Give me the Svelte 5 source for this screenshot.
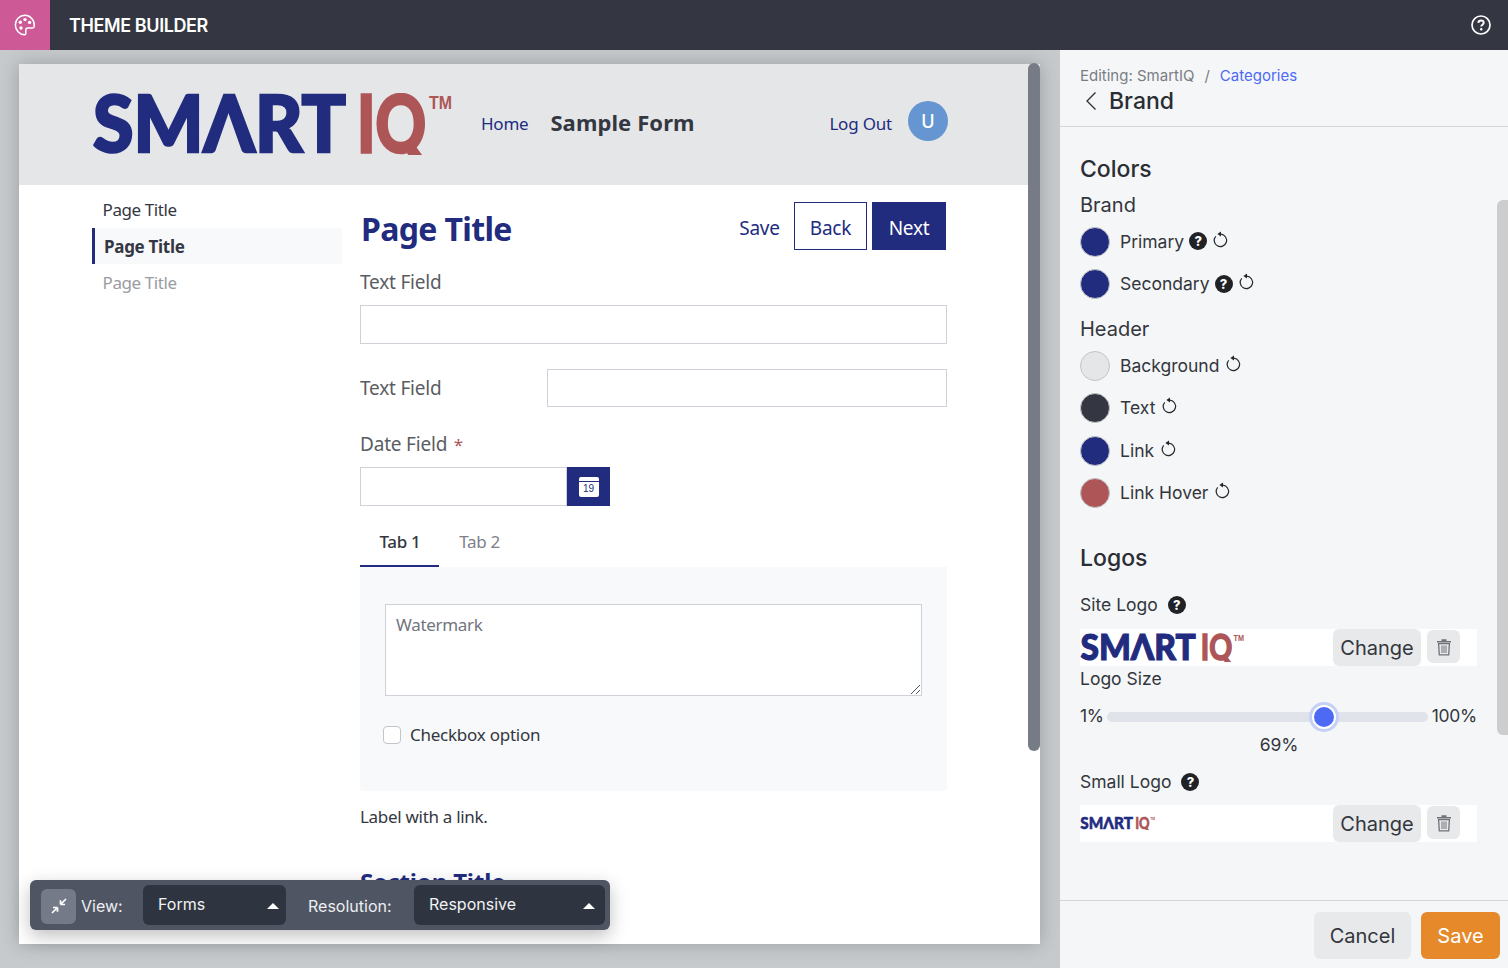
<script>
  const brandRows = [
    { name: 'Primary', color: '#212c7f', help: true },
    { name: 'Secondary', color: '#212c7f', help: true }
  ];
  const headerRows = [
    { name: 'Background', color: '#e5e6e8' },
    { name: 'Text', color: '#343741' },
    { name: 'Link', color: '#212c7f' },
    { name: 'Link Hover', color: '#ad5557' }
  ];
</script>

{#snippet logo(cls)}
  <svg class={cls} viewBox="0 0 360 62" role="img" aria-label="SmartIQ logo">
    <text class="lg-a" x="1" y="59" textLength="253" lengthAdjust="spacingAndGlyphs">SMΛRT</text>
    <text class="lg-b" x="265" y="59" textLength="69" lengthAdjust="spacingAndGlyphs">IQ</text>
    <text class="lg-c" x="337" y="16" textLength="23" lengthAdjust="spacingAndGlyphs">TM</text>
  </svg>
{/snippet}

{#snippet reset()}
  <svg class="reset" viewBox="0 0 17 17" aria-hidden="true">
    <path d="M9 3.200A6.200 6.200 0 1 1 3.700 5.300" fill="none" stroke="#24272c" stroke-width="1.200"/>
    <path d="M5.400 3.100 9 .6v5z" fill="#24272c"/>
  </svg>
{/snippet}

{#snippet help()}
  <span class="help">?</span>
{/snippet}

{#snippet trash()}
  <button class="trash" aria-label="Delete">
    <svg viewBox="0 0 16 18" width="16" height="18" aria-hidden="true">
      <path d="M1 3h14v1.600H1zM5.500 1.200h5V3h-5z" fill="#6f7278"/>
      <path d="M2.600 5.600h10.800l-.7 11.200H3.300z" fill="none" stroke="#6f7278" stroke-width="1.300"/>
      <path d="M6 7.500v7.500M8 7.500v7.500M10 7.500v7.500" stroke="#6f7278" stroke-width="1"/>
    </svg>
  </button>
{/snippet}

<div class="app">
  <header class="topbar">
    <div class="brandmark">
      <svg viewBox="0 0 22 22" width="22" height="22" aria-hidden="true">
        <path d="M11 1.300C5.600 1.300 1.400 5.500 1.400 11c0 5.200 4 9.600 9 9.700.9 0 1.400-.5 1.400-1.300v-3.200c0-1.300 1-2.100 2-2.100h4.700c1 0 1.700-.7 1.800-1.800.5-6.300-4.200-11-9.300-11z" fill="none" stroke="#fff" stroke-width="1.500"/>
        <circle cx="11" cy="5.600" r="1.700" fill="#fff"/>
        <circle cx="6.300" cy="8.300" r="1.700" fill="#fff"/>
        <circle cx="15.600" cy="8.400" r="1.700" fill="#fff"/>
        <circle cx="7" cy="14" r="1.700" fill="#fff"/>
      </svg>
    </div>
    <div class="apptitle">THEME BUILDER</div>
    <svg class="tophelp" viewBox="0 0 20 20" width="20" height="20" aria-hidden="true">
      <circle cx="10" cy="10" r="9" fill="none" stroke="#fff" stroke-width="1.700"/>
      <path d="M7.300 7.900C7.400 6.300 8.600 5.500 10 5.500c1.600 0 2.700.9 2.700 2.200 0 2-2.500 2-2.500 3.800" fill="none" stroke="#fff" stroke-width="1.900"/>
      <circle cx="10.200" cy="14.300" r="1.200" fill="#fff"/>
    </svg>
  </header>

  <div class="workspace">
    <main class="stage">
      <div class="preview">
        <div class="site-header">
          {@render logo('logo-lg')}
          <a class="home">Home</a>
          <span class="sample">Sample Form</span>
          <a class="logout">Log Out</a>
          <span class="avatar">U</span>
        </div>
        <div class="site-body">
          <nav class="pages">
            <div class="page">Page Title</div>
            <div class="page active">Page Title</div>
            <div class="page muted">Page Title</div>
          </nav>
          <div class="form">
            <div class="titlebar">
              <h1>Page Title</h1>
              <div class="actions">
                <span class="btn-save">Save</span>
                <span class="btn-back">Back</span>
                <span class="btn-next">Next</span>
              </div>
            </div>
            <label class="lbl first">Text Field</label>
            <div class="input full"></div>
            <div class="inline">
              <label class="lbl">Text Field</label>
              <div class="input wide"></div>
            </div>
            <label class="lbl date">Date Field <span class="req">*</span></label>
            <div class="datefield">
              <div class="input dateinput"></div>
              <div class="calbtn">
                <div class="cal"><span>19</span></div>
              </div>
            </div>
            <div class="tabs">
              <div class="tab on">Tab 1</div>
              <div class="tab">Tab 2</div>
            </div>
            <div class="tabpanel">
              <div class="textarea">
                Watermark
                <svg class="grip" viewBox="0 0 10 10" width="10" height="10" aria-hidden="true">
                  <path d="M1 10 10 1M6 10l4-4" stroke="#555" stroke-width="1" fill="none"/>
                </svg>
              </div>
              <div class="check"><span class="box"></span>Checkbox option</div>
            </div>
            <p class="linkline">Label with a link.</p>
            <h2>Section Title</h2>
          </div>
        </div>
      </div>
      <div class="stage-scroll"></div>

      <div class="toolbar">
        <button class="compress" aria-label="Compress">
          <svg viewBox="0 0 20 20" width="20" height="20" aria-hidden="true">
            <path d="M11.500 8.500 17 3M11.500 8.500V4.200M11.500 8.500h4.500M8.500 11.500 3 17M8.500 11.500V15.800M8.500 11.500H4" fill="none" stroke="#fff" stroke-width="1.700"/>
          </svg>
        </button>
        <span class="tl view">View:</span>
        <div class="sel forms">Forms<i></i></div>
        <span class="tl res">Resolution:</span>
        <div class="sel resp">Responsive<i></i></div>
      </div>
    </main>

    <aside class="panel">
      <div class="panel-head">
        <div class="crumbs"><span>Editing: SmartIQ</span><span class="slash">/</span><a>Categories</a></div>
        <div class="backrow">
          <svg viewBox="0 0 14 20" width="14" height="20" aria-hidden="true"><path d="M11.500 1.500 3 10l8.500 8.500" fill="none" stroke="#2a2d33" stroke-width="1.300"/></svg>
          <span>Brand</span>
        </div>
      </div>
      <div class="panel-body">
        <div class="sec colors">Colors</div>
        <div class="sub">Brand</div>
        {#each brandRows as r}
          <div class="row">
            <span class="dot" style="background:{r.color}"></span>
            <span class="rname">{r.name}</span>
            {@render help()}
            {@render reset()}
          </div>
        {/each}
        <div class="sub hdr">Header</div>
        {#each headerRows as r}
          <div class="row">
            <span class="dot" style="background:{r.color}"></span>
            <span class="rname">{r.name}</span>
            {@render reset()}
          </div>
        {/each}
        <div class="sec logos">Logos</div>
        <div class="fieldname site">Site Logo {@render help()}</div>
        <div class="logorow">
          <div class="logocell">{@render logo('logo-md')}</div>
          <button class="change">Change</button>
          {@render trash()}
        </div>
        <div class="fieldname size">Logo Size</div>
        <div class="sliderrow">
          <span>1%</span>
          <div class="track"><span class="thumb"></span></div>
          <span class="max">100%</span>
        </div>
        <div class="pct">69%</div>
        <div class="fieldname small">Small Logo {@render help()}</div>
        <div class="logorow second">
          <div class="logocell">{@render logo('logo-sm')}</div>
          <button class="change">Change</button>
          {@render trash()}
        </div>
      </div>
      <div class="panel-foot">
        <button class="cancel">Cancel</button>
        <button class="save">Save</button>
      </div>
      <div class="panel-scroll"></div>
    </aside>
  </div>
</div>

<style>
  :global(body) { margin: 0; overflow: hidden; }
  button { font: inherit; border: 0; padding: 0; }
  .app { width: 1508px; height: 968px; display: flex; flex-direction: column; overflow: hidden; font-family: Inter, sans-serif; }

  .topbar { height: 50px; flex: none; background: #343741; display: flex; align-items: center; color: #fff; }
  .brandmark { width: 50px; height: 50px; background: #cd5a96; display: flex; align-items: center; justify-content: center; }
  .apptitle { margin-left: 19px; font: 600 18px Inter, sans-serif; letter-spacing: -0.4px; }
  .tophelp { margin-left: auto; margin-right: 17px; }

  .workspace { flex: 1; display: flex; min-height: 0; }
  .stage { width: 1060px; flex: none; position: relative; background: #c6cacd; padding: 14px 20px 24px 19px; box-sizing: border-box; overflow: hidden; }
  .preview { height: 880px; background: #fff; box-shadow: 0 0 18px rgba(0,0,0,.22); overflow: hidden; font-family: "Noto Sans", sans-serif; color: #343741; }
  .stage-scroll { position: absolute; left: 1028px; top: 13px; width: 12px; height: 688px; border-radius: 6px; background: #767b86; }

  .site-header { height: 121px; background: #e5e6e8; display: flex; align-items: center; padding-left: 73px; box-sizing: border-box; position: relative; }
  .logo-lg { width: 360px; height: 62px; flex: none; margin-top: -2px; }
  .logo-md { display: block; width: 164px; height: 29px; }
  .logo-sm { display: block; width: 75px; height: 14px; margin-top: -2px; }
  .logocell { margin-right: auto; }
  .lg-a { font: 900 79px Lato, sans-serif; fill: #212c7f; stroke: #212c7f; stroke-width: 2.500px; }
  .lg-b { font: 700 79px Lato, sans-serif; fill: #ad5557; stroke: #ad5557; stroke-width: 3.500px; }
  .lg-c { font: 700 19px "Liberation Sans", sans-serif; fill: #ad5557; }
  .home { margin: -2px 0 0 29px; font-size: 17px; color: #212c7f; letter-spacing: -0.25px; }
  .sample { margin: -6px 0 0 22px; font-size: 22px; font-weight: 700; letter-spacing: .1px; color: #343741; }
  .logout { margin: -2px 0 0 auto; font-size: 17px; color: #212c7f; letter-spacing: -0.2px; }
  .avatar { margin: -7px 92px 0 16px; width: 40px; height: 40px; border-radius: 50%; background: #6596d2; color: #fff; display: flex; align-items: center; justify-content: center; font: 500 18px Inter, sans-serif; }

  .site-body { display: flex; padding-left: 73px; padding-top: 7px; }
  .pages { width: 250px; flex: none; margin-right: 18px; }
  .page { height: 36px; line-height: 36px; padding-left: 10.500px; font-size: 17px; letter-spacing: -.4px; color: #343741; box-sizing: border-box; }
  .page.active { background: #f8f9fb; border-left: 3px solid #212c7f; padding-left: 9px; font-weight: 700; line-height: 38px; letter-spacing: -.3px; }
  .page.muted { color: #9a9ca2; line-height: 38px; }

  .form { width: 587px; }
  .titlebar { height: 48px; margin-top: 10px; display: flex; align-items: center; }
  h1 { margin: 6px 0 0 1px; font-size: 32px; font-weight: 700; color: #212c7f; letter-spacing: -0.65px; line-height: 42px; }
  .actions { margin-left: auto; margin-right: 1px; display: flex; align-items: stretch; height: 48px; font-size: 19px; letter-spacing: -.25px; }
  .actions span { display: flex; align-items: center; justify-content: center; box-sizing: border-box; padding-top: 3px; }
  .btn-save { color: #212c7f; width: 41px; margin-right: 14px; }
  .btn-back { color: #212c7f; width: 73px; border: 1px solid #212c7f; margin-right: 5px; }
  .btn-next { color: #fff; width: 74px; background: #212c7f; }
  .lbl { display: block; font-size: 19px; color: #5a5c63; letter-spacing: -.2px; line-height: 24px; }
  .lbl.first { margin-top: 20px; }
  .input { height: 39px; box-sizing: border-box; border: 1px solid #cfd0d8; background: #fff; }
  .full { margin-top: 11px; }
  .inline { display: flex; align-items: center; margin-top: 25px; }
  .inline .lbl { width: 187px; }
  .wide { flex: 1; height: 38px; }
  .date { margin-top: 25px; }
  .req { color: #ad5557; margin-left: 2px; font-size: 17px; }
  .datefield { display: flex; margin-top: 10px; }
  .dateinput { width: 207px; }
  .calbtn { width: 43px; height: 39px; background: #212c7f; display: flex; align-items: center; justify-content: center; }
  .cal { width: 20px; height: 20px; background: #fff; border-radius: 2px; position: relative; box-sizing: border-box; padding-top: 6px; text-align: center; }
  .cal::before { content: ""; position: absolute; left: 0; right: 0; top: 4px; height: 1px; background: #212c7f; }
  .cal span { display: block; font: 10px/12px "Liberation Sans", sans-serif; color: #212c7f; }
  .tabs { display: flex; margin-top: 11px; height: 50px; }
  .tab { width: 79px; text-align: center; line-height: 50px; font-size: 17px; color: #7c8089; letter-spacing: -.3px; box-sizing: border-box; }
  .tab:last-child { width: 81px; }
  .tab.on { color: #343741; font-weight: 500; border-bottom: 2px solid #212c7f; padding-left: 1px; }
  .tabpanel { height: 224px; background: #f8f9fa; border-radius: 0 0 4px 4px; padding: 37px 25px 0; box-sizing: border-box; }
  .textarea { height: 92px; box-sizing: border-box; border: 1px solid #cfd0d8; background: #fff; padding: 8px 10px; font-size: 17px; letter-spacing: -.3px; line-height: 24px; color: #72757d; position: relative; }
  .grip { position: absolute; right: 1px; bottom: 1px; }
  .check { display: flex; align-items: center; margin: 30px 0 0 -2px; font-size: 17px; letter-spacing: -.25px; color: #343741; line-height: 18px; }
  .box { width: 18px; height: 18px; box-sizing: border-box; border: 1px solid #c3c4ca; border-radius: 4px; background: #fff; margin-right: 9px; }
  .linkline { margin: 14px 0 0; font-size: 17px; letter-spacing: -.3px; line-height: 24px; color: #343741; }
  h2 { margin: 37px 0 0; font-size: 24px; font-weight: 700; color: #212c7f; line-height: 32px; letter-spacing: -.15px; }

  .toolbar { position: absolute; left: 30px; top: 830px; width: 580px; height: 50px; border-radius: 6px; background: #4f5562; box-shadow: 0 6px 18px rgba(0,0,0,.25); display: flex; align-items: center; color: #fff; font-size: 16px; }
  .compress { width: 35px; height: 35px; margin: 2px 0 0 11px; background: #757a89; border-radius: 6px; display: flex; align-items: center; justify-content: center; flex: none; }
  .tl { color: #eceef1; margin-top: 1px; }
  .view { margin-left: 5px; width: 62px; }
  .res { margin-left: 22px; width: 106px; }
  .sel { height: 40px; line-height: 39px; background: #2f3540; border-radius: 6px; padding-left: 15px; box-sizing: border-box; position: relative; color: #f1f2f4; }
  .forms { width: 143px; }
  .resp { width: 191px; }
  .sel i { position: absolute; right: 7px; top: 18px; border: 6px solid transparent; border-top: 0; border-bottom: 6px solid #fff; }
  .resp i { right: 10px; }

  .panel { flex: 1; background: #f5f6f8; display: flex; flex-direction: column; position: relative; color: #33363c; min-width: 0; }
  .panel-head { height: 77px; flex: none; border-bottom: 1px solid #d4d5da; padding: 16px 20px 0; box-sizing: border-box; }
  .crumbs { font-size: 15px; line-height: 20px; color: #7a7d85; }
  .slash { margin: 0 10px; }
  .crumbs a { color: #4d6af5; }
  .backrow { display: flex; align-items: center; line-height: 30px; color: #2a2d33; gap: 11px; margin-left: 4px; font-weight: 500; }
  .backrow span { font-size: 23px; }
  .panel-body { flex: 1; min-height: 0; padding: 0 31px 0 20px; overflow: hidden; font-size: 17.500px; }
  .sec { font-size: 23px; font-weight: 500; line-height: 32px; color: #2a2d33; }
  .colors { margin-top: 26px; }
  .sub { font-size: 20px; line-height: 28px; margin: 6px 0 1px; }
  .hdr { margin: 10px 0 1px; }
  .row { display: flex; align-items: center; height: 42.500px; }
  .dot { width: 28px; height: 28px; border-radius: 50%; border: 1px solid #c3c4c9; flex: none; margin-right: 10px; margin-top: 1px; }
  .rname { margin-right: 5px; }
  .help { width: 18px; height: 18px; border-radius: 50%; background: #202226; color: #fff; display: inline-flex; align-items: center; justify-content: center; font: 800 13px Inter, sans-serif; flex: none; margin-right: 4px; }
  .reset { width: 17px; height: 17px; margin: -4px 0 0 1px; flex: none; }
  .logos { margin-top: 28px; }
  .fieldname { display: flex; align-items: center; gap: 10px; line-height: 24px; }
  .site { margin-top: 19px; }
  .logorow { height: 37px; background: #fff; display: flex; align-items: center; margin-top: 12px; width: 397px; }
  .logorow.second { margin-top: 11px; }
  .change { width: 88px; height: 37px; background: #e8e9eb; border-radius: 6px; font-size: 20px; color: #33363c; }
  .trash { width: 33px; height: 33px; margin: -2px 17px 0 6px; background: #e8e9eb; border-radius: 6px; display: flex; align-items: center; justify-content: center; flex: none; }
  .size { margin-top: 1px; }
  .sliderrow { display: flex; align-items: center; width: 397px; margin-top: 13px; height: 26px; justify-content: space-between; line-height: 22px; letter-spacing: -.3px; }
  .sliderrow > span { margin-top: -3px; }
  .track { width: 321px; height: 10px; background: #e0e3e9; border-radius: 5px; position: relative; }
  .thumb { position: absolute; left: 217px; top: 5px; width: 20px; height: 20px; margin: -10px 0 0 -10px; background: #4d6af5; border: 2px solid #fff; border-radius: 50%; box-shadow: 0 0 0 3px #c5d0f6; box-sizing: content-box; transform: translate(-2px,-2px); }
  .pct { text-align: center; line-height: 24px; margin: 3px 0 0 0; width: 397px; letter-spacing: -.2px; padding-left: 1px; box-sizing: border-box; }
  .small { margin-top: 13px; }
  .panel-foot { height: 68px; flex: none; border-top: 1px solid #d4d5da; box-sizing: border-box; display: flex; justify-content: flex-end; padding: 11px 8px 0 0; gap: 10px; }
  .panel-foot button { height: 47px; border-radius: 6px; font-size: 20px; }
  .cancel { width: 97px; background: #e8e9eb; color: #33363c; }
  .save { width: 79px; background: #e5892b; color: #fff; }
  .panel-scroll { position: absolute; right: 0; top: 150px; width: 11px; height: 535px; border-radius: 6px 0 0 6px; background: #cdcdcd; }
</style>
